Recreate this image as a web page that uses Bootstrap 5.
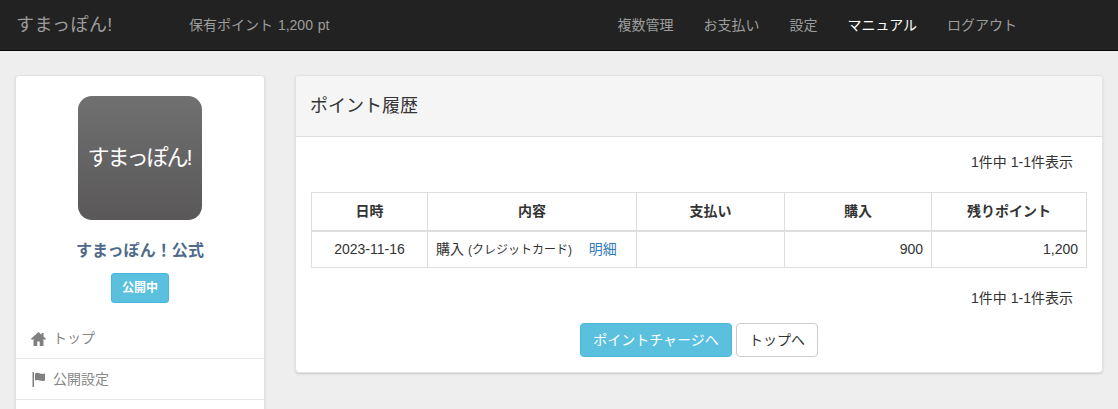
<!DOCTYPE html>
<html lang="ja">
<head>
<meta charset="utf-8">
<title>ポイント履歴</title>
<link href="https://cdn.jsdelivr.net/npm/bootstrap@5.3.0/dist/css/bootstrap.min.css" rel="stylesheet">
<style>
html,body{height:409px;overflow:hidden}
body{background:#eee;font-family:"Liberation Sans","Noto Sans CJK JP",sans-serif;font-size:14px;line-height:20px;color:#333}
.navbar.topbar{background:#222;height:51px;border-bottom:1px solid #080808;padding:0 16px;justify-content:flex-start;flex-wrap:nowrap}
.topbar .navbar-brand{font-size:18px;color:#9d9d9d;width:173px;line-height:20px;padding:0;margin:0;letter-spacing:.4px}
.pts{color:#9d9d9d;flex:0 0 auto;word-spacing:1px}
.topbar .navbar-nav{margin-left:273px}
.topbar .nav-link{color:#9d9d9d;padding:0 15px;line-height:20px;font-size:14px}
.topbar .nav-link.on{color:#fff}
.pagewrap{padding:24px 15px 0 15px;gap:30px;align-items:flex-start}
.card.side,.card.mainpanel{background:#fff;border-radius:4px;box-shadow:0 1px 2px rgba(0,0,0,.15);border:1px solid #e3e3e3}
.card.side{width:250px;flex:0 0 250px;border-bottom:0}
.logobox{width:124px;height:124px;border-radius:14px;background:linear-gradient(#707070,#5a5858);color:#fff;font-size:22px;font-weight:400;letter-spacing:-2px;line-height:22px;padding:0 2px 1px 0;margin:20px auto 0;display:flex;align-items:center;justify-content:center;white-space:nowrap}
.pname{font-size:16px;font-weight:700;color:#4f6a8a;text-align:center;margin-top:20px;line-height:22px;letter-spacing:.1px}
.pub{display:block;width:58px;height:30px;margin:11px auto 0;background:#5bc0de;border:1px solid #46b8da;border-radius:3px;color:#fff;font-size:12px;font-weight:700;line-height:28px;text-align:center}
.card>.list-group.sidenav{margin-top:15px;border-radius:0;border-top:0}
.sidenav .list-group-item{display:flex;align-items:center;height:41px;padding:0 15px;color:#888;border-width:0 0 1px;border-color:#e7e7e7;gap:7px;background:none}
.card.mainpanel{width:808px;flex:0 0 808px;height:298px}
.card-header.mhead{background:#f5f5f5;border-bottom:1px solid #ddd;height:61px;padding:0 14px;font-size:18px;line-height:60px;border-radius:3px 3px 0 0;color:#333}
.cnt{text-align:right;padding-right:29px;line-height:20px}
.cnt1{margin-top:15px}
.cnt2{margin-top:20px}
.table.hist{width:776px;margin:20px 0 0 15px;table-layout:fixed;--bs-table-border-color:#ddd;--bs-table-color:#333;border-color:#ddd}
.table.hist td,.table.hist th{padding:7px 8px;height:36px;vertical-align:middle;line-height:20px;box-shadow:none}
.table.hist th{text-align:center;font-weight:700;border-bottom:2px solid #ddd;height:38px}
.table.hist small{font-size:12px}
.table.hist a{color:#337ab7;text-decoration:none;margin-left:13px}
.w1{width:116px}.w2{width:209px}.w3{width:148px}.w4{width:147px}
.acts{gap:4px;margin-top:15px}
.acts .btn{font-size:14px;line-height:20px;padding:6px 12px;border-radius:4px}
.acts .btn-info{background:#5bc0de;border-color:#46b8da;color:#fff;min-width:152px}
.acts .btn-light{background:#fff;border-color:#ccc;color:#333}
</style>
</head>
<body>
<nav class="navbar navbar-dark topbar">
  <a class="navbar-brand" href="#">すまっぽん!</a>
  <div class="pts">保有ポイント 1,200 pt</div>
  <div class="navbar-nav flex-row">
    <a href="#" class="nav-link">複数管理</a><a href="#" class="nav-link">お支払い</a><a href="#" class="nav-link">設定</a><a href="#" class="nav-link on">マニュアル</a><a href="#" class="nav-link">ログアウト</a>
  </div>
</nav>
<div class="d-flex pagewrap">
  <aside class="card side">
    <div class="logobox">すまっぽん!</div>
    <div class="pname">すまっぽん！公式</div>
    <span class="pub">公開中</span>
    <div class="list-group list-group-flush sidenav">
      <a href="#" class="list-group-item"><svg width="15" height="15" viewBox="0 0 15 15" fill="#808080"><path d="M7.500 1 0 7.800 1 9l1.500-1.300V15h3.800v-4.500h2.400V15h3.800V7.700L14 9l1-1.200-2.500-2.300V2h-2v1.700z"/></svg>トップ</a>
      <a href="#" class="list-group-item"><svg width="15" height="15" viewBox="0 0 15 15" fill="#808080"><path d="M1.500 0h1.500v15H1.500zM4 1.500c2-1.200 3.500-.6 5 0s3 .7 5 0v7c-2 .8-3.500.5-5 0s-3-1-5 0z"/></svg>公開設定</a>
      <a href="#" class="list-group-item">&nbsp;</a>
    </div>
  </aside>
  <main class="card mainpanel">
    <div class="card-header mhead">ポイント履歴</div>
    <div class="cnt cnt1">1件中 1-1件表示</div>
    <table class="table table-bordered hist">
      <colgroup><col class="w1"><col class="w2"><col class="w3"><col class="w4"><col></colgroup>
      <thead><tr><th>日時</th><th>内容</th><th>支払い</th><th>購入</th><th>残りポイント</th></tr></thead>
      <tbody><tr>
        <td class="text-center">2023-11-16</td>
        <td>購入 <small>(クレジットカード)</small> <a href="#">明細</a></td>
        <td></td>
        <td class="text-end">900</td>
        <td class="text-end">1,200</td>
      </tr></tbody>
    </table>
    <div class="cnt cnt2">1件中 1-1件表示</div>
    <div class="d-flex justify-content-center acts">
      <a href="#" class="btn btn-info">ポイントチャージへ</a>
      <a href="#" class="btn btn-light">トップへ</a>
    </div>
  </main>
</div>
<script src="https://cdn.jsdelivr.net/npm/bootstrap@5.3.0/dist/js/bootstrap.bundle.min.js"></script>
</body>
</html>
